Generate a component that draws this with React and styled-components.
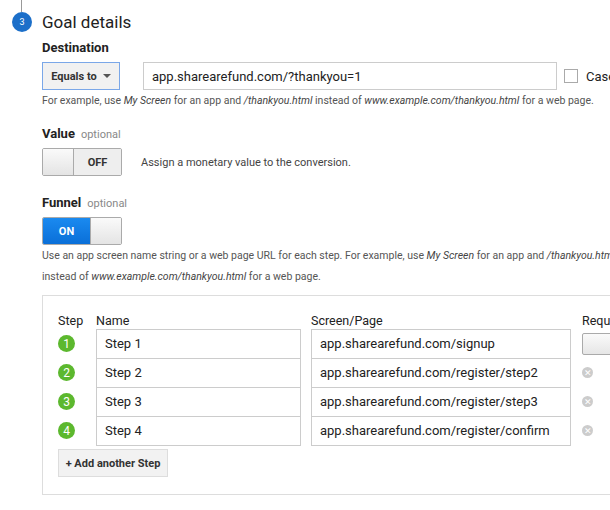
import React from "react";
import styled, { createGlobalStyle } from "styled-components";

const G = createGlobalStyle`
  body{margin:0;font-family:Roboto,"Liberation Sans",sans-serif;color:#222;background:#fff;overflow:hidden;width:610px;height:510px}
`;
const Page = styled.div`position:relative;padding:0 0 0 42px;width:900px;`;
const Line = styled.div`position:absolute;left:21px;top:0;width:1px;height:12px;background:#999;`;
const Num = styled.div`position:absolute;left:12px;top:12px;width:20px;height:20px;border-radius:50%;background:#1c6fc9;color:#fff;font-size:9px;display:flex;align-items:center;justify-content:center;`;
const Title = styled.h1`margin:0;padding-top:10px;font-size:17px;font-weight:400;line-height:24px;color:#222;`;
const Label = styled.div`font-size:13px;font-weight:700;margin-top:${p=>p.mt}px;line-height:18px;span{font-weight:400;color:#888;font-size:11px;margin-left:6px;}`;
const Row = styled.div`display:flex;align-items:center;margin-top:${p=>p.mt||0}px;`;
const Select = styled.div`width:76px;height:26px;border:1px solid #7aa7e8;background:#f1f1f1;display:flex;align-items:center;justify-content:center;gap:6px;font-size:11px;font-weight:700;color:#333;box-sizing:content-box;`;
const Caret = styled.span`border-left:4px solid transparent;border-right:4px solid transparent;border-top:4px solid #555;`;
const Input = styled.div`width:${p=>p.w}px;height:${p=>p.h||28}px;border:1px solid #ccc;box-sizing:border-box;display:flex;align-items:center;padding-left:8px;font-size:13px;color:#222;margin-left:${p=>p.ml||0}px;`;
const Check = styled.div`width:12px;height:12px;border:1px solid #aaa;margin-left:7px;`;
const CaseT = styled.span`font-size:13px;margin-left:8px;`;
const Hint = styled.div`font-size:10.5px;color:#555;line-height:21px;margin-top:${p=>p.mt||0}px;white-space:nowrap;i{color:#444}`;
const Toggle = styled.div`width:80px;height:28px;border:1px solid #aaa;border-radius:2px;box-sizing:border-box;display:flex;overflow:hidden;`;
const Knob = styled.div`width:30px;background:linear-gradient(#fafafa,#e4e4e4);border-${p=>p.side}:1px solid #aaa;`;
const TState = styled.div`flex:1;display:flex;align-items:center;justify-content:center;font-size:11px;font-weight:700;color:${p=>p.on?"#fff":"#333"};background:${p=>p.on?"linear-gradient(#1a8af0,#0a6fd8)":"#eee"};`;
const Desc = styled.span`font-size:11px;color:#444;margin-left:19px;`;
const Box = styled.div`margin-top:8px;width:640px;height:200px;border:1px solid #ddd;box-sizing:border-box;padding:16px 0 0 15px;`;
const Head = styled.div`display:flex;font-size:12.5px;color:#222;line-height:17px;`;
const Steps = styled.div`display:flex;flex-direction:column;`;
const SRow = styled.div`display:flex;align-items:center;height:29px;`;
const Circ = styled.div`width:17px;height:17px;border-radius:50%;background:#5cb82e;color:#fff;font-size:12px;display:flex;align-items:center;justify-content:center;margin-right:21px;`;
const XIcon = styled.div`width:11px;height:11px;border-radius:50%;background:#ccc;color:#fff;font-size:9px;display:flex;align-items:center;justify-content:center;margin-left:11px;`;
const Req = styled.div`width:40px;height:20px;border:1px solid #aaa;border-radius:2px;background:linear-gradient(#fafafa,#e6e6e6);margin-left:11px;`;
const AddBtn = styled.div`margin-top:4px;width:110px;height:28px;border:1px solid #ddd;background:#f2f2f2;box-sizing:border-box;display:flex;align-items:center;justify-content:center;font-size:11px;font-weight:700;color:#333;`;

const steps=[["Step 1","app.sharearefund.com/signup"],["Step 2","app.sharearefund.com/register/step2"],["Step 3","app.sharearefund.com/register/step3"],["Step 4","app.sharearefund.com/register/confirm"]];

export default function App(){
  return (<Page><G/><Line/><Num>3</Num>
    <Title>Goal details</Title>
    <Label mt={5}>Destination</Label>
    <Row mt={5}><Select>Equals to <Caret/></Select><Input w={414} ml={23}>app.sharearefund.com/?thankyou=1</Input><Check/><CaseT>Case sensitive</CaseT></Row>
    <Hint>For example, use <i>My Screen</i> for an app and <i>/thankyou.html</i> instead of <i>www.example.com/thankyou.html</i> for a web page.</Hint>
    <Label mt={14}>Value<span>optional</span></Label>
    <Row mt={4}><Toggle><Knob side="right"/><TState>OFF</TState></Toggle><Desc>Assign a monetary value to the conversion.</Desc></Row>
    <Label mt={18}>Funnel<span>optional</span></Label>
    <Row mt={4}><Toggle><TState on>ON</TState><Knob side="left"/></Toggle></Row>
    <Hint mt={0}>Use an app screen name string or a web page URL for each step. For example, use <i>My Screen</i> for an app and <i>/thankyou.html</i><br/>instead of <i>www.example.com/thankyou.html</i> for a web page.</Hint>
    <Box>
      <Head><span style={{width:38}}>Step</span><span style={{width:215}}>Name</span><span style={{width:271}}>Screen/Page</span><span>Required?</span></Head>
      <Steps>{steps.map((s,i)=>(<SRow key={i}><Circ>{i+1}</Circ><Input w={205} h={30}>{s[0]}</Input><Input w={260} h={30} ml={10}>{s[1]}</Input>{i===0?<Req/>:<XIcon>✕</XIcon>}</SRow>))}</Steps>
      <AddBtn>+ Add another Step</AddBtn>
    </Box>
  </Page>);
}
